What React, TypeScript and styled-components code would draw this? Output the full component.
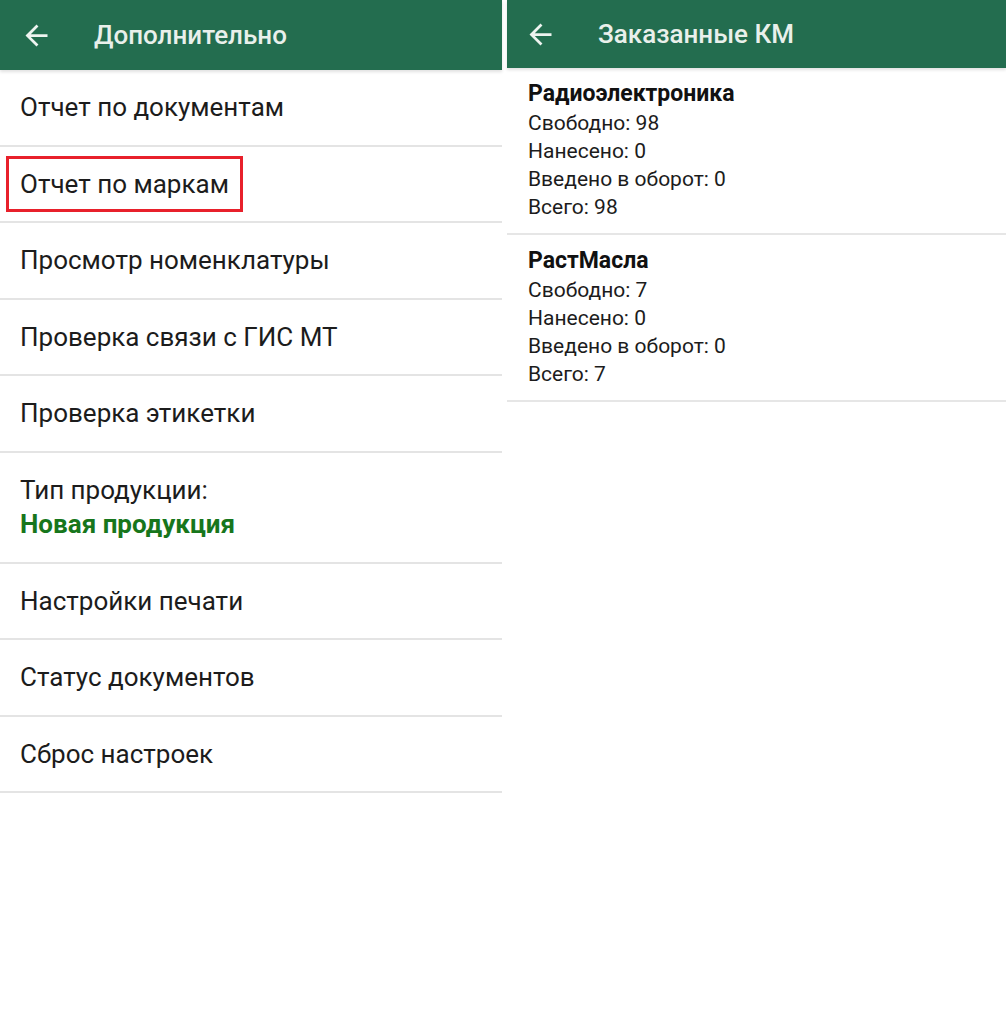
import React from "react";
import styled, { createGlobalStyle } from "styled-components";

const GlobalStyle = createGlobalStyle`
  html, body {
    margin: 0;
    padding: 0;
    background: #ffffff;
  }
  body {
    font-family: Roboto, "Noto Sans", "Liberation Sans", sans-serif;
    color: #1c1c1c;
  }
`;

const Screens = styled.div`
  display: flex;
  width: 1006px;
  height: 1024px;
  gap: 5px;
  background: #ffffff;
`;

const Screen = styled.div<{ width?: number }>`
  display: flex;
  flex-direction: column;
  width: ${({ width }) => (width ? `${width}px` : "auto")};
  flex: ${({ width }) => (width ? "none" : "1")};
`;

const Toolbar = styled.header<{ height: number; inset: number }>`
  display: flex;
  align-items: center;
  height: ${({ height }) => height}px;
  padding-left: ${({ inset }) => inset}px;
  background: #236d4f;
  box-shadow: 0 2px 3px rgba(0, 0, 0, 0.12);
  position: relative;
  z-index: 1;
`;

const BackButton = styled.span`
  display: flex;
  align-items: center;
  justify-content: center;
  width: 33px;
  height: 33px;
  margin-right: 41px;
  color: #eef4f0;
`;

const Title = styled.h1`
  margin: 0;
  font-size: 26px;
  font-weight: 500;
  color: #e9f0eb;
`;

const MenuList = styled.div`
  display: flex;
  flex-direction: column;
`;

const MenuItem = styled.div<{ tall?: boolean }>`
  display: flex;
  flex-direction: column;
  justify-content: center;
  height: ${({ tall }) => (tall ? 109 : 74.5)}px;
  padding-left: 20px;
  border-bottom: 2px solid #e4e4e4;
  font-size: 26px;
  line-height: 34px;
  color: #1c1c1c;
`;

const Highlight = styled.span`
  align-self: flex-start;
  margin-left: -14px;
  padding: 8px 11px 8px 11px;
  border: 3px solid #e8202b;
  line-height: 34px;
`;

const ValueText = styled.span`
  font-weight: 700;
  color: #17761c;
`;

const OrderCard = styled.div`
  display: flex;
  flex-direction: column;
  padding: 11px 20px 12px 21px;
  border-bottom: 2px solid #e6e6e6;
`;

const OrderName = styled.div`
  font-size: 23px;
  font-weight: 700;
  line-height: 30px;
  color: #111111;
`;

const OrderLine = styled.div`
  font-size: 21px;
  line-height: 28px;
  color: #1c1c1c;
`;

const BackIcon = () => (
  <svg width="33" height="33" viewBox="0 0 24 24" fill="currentColor">
    <path d="M20 11H7.83l5.59-5.59L12 4l-8 8 8 8 1.41-1.41L7.83 13H20v-2z" />
  </svg>
);

const menu = [
  "Отчет по документам",
  "Отчет по маркам",
  "Просмотр номенклатуры",
  "Проверка связи с ГИС МТ",
  "Проверка этикетки",
];

const menuTail = ["Настройки печати", "Статус документов", "Сброс настроек"];

const orders = [
  { name: "Радиоэлектроника", free: 98, applied: 0, circulated: 0, total: 98 },
  { name: "РастМасла", free: 7, applied: 0, circulated: 0, total: 7 },
];

const App: React.FC = () => {
  return (
    <>
      <GlobalStyle />
      <Screens>
        <Screen width={502}>
          <Toolbar height={70} inset={20}>
            <BackButton>
              <BackIcon />
            </BackButton>
            <Title>Дополнительно</Title>
          </Toolbar>
          <MenuList>
            {menu.map((label) => (
              <MenuItem key={label}>
                {label === "Отчет по маркам" ? <Highlight>{label}</Highlight> : label}
              </MenuItem>
            ))}
            <MenuItem tall>
              <span>Тип продукции:</span>
              <ValueText>Новая продукция</ValueText>
            </MenuItem>
            {menuTail.map((label) => (
              <MenuItem key={label}>{label}</MenuItem>
            ))}
          </MenuList>
        </Screen>
        <Screen>
          <Toolbar height={68} inset={17}>
            <BackButton>
              <BackIcon />
            </BackButton>
            <Title>Заказанные КМ</Title>
          </Toolbar>
          {orders.map((o) => (
            <OrderCard key={o.name}>
              <OrderName>{o.name}</OrderName>
              <OrderLine>Свободно: {o.free}</OrderLine>
              <OrderLine>Нанесено: {o.applied}</OrderLine>
              <OrderLine>Введено в оборот: {o.circulated}</OrderLine>
              <OrderLine>Всего: {o.total}</OrderLine>
            </OrderCard>
          ))}
        </Screen>
      </Screens>
    </>
  );
};

export default App;
